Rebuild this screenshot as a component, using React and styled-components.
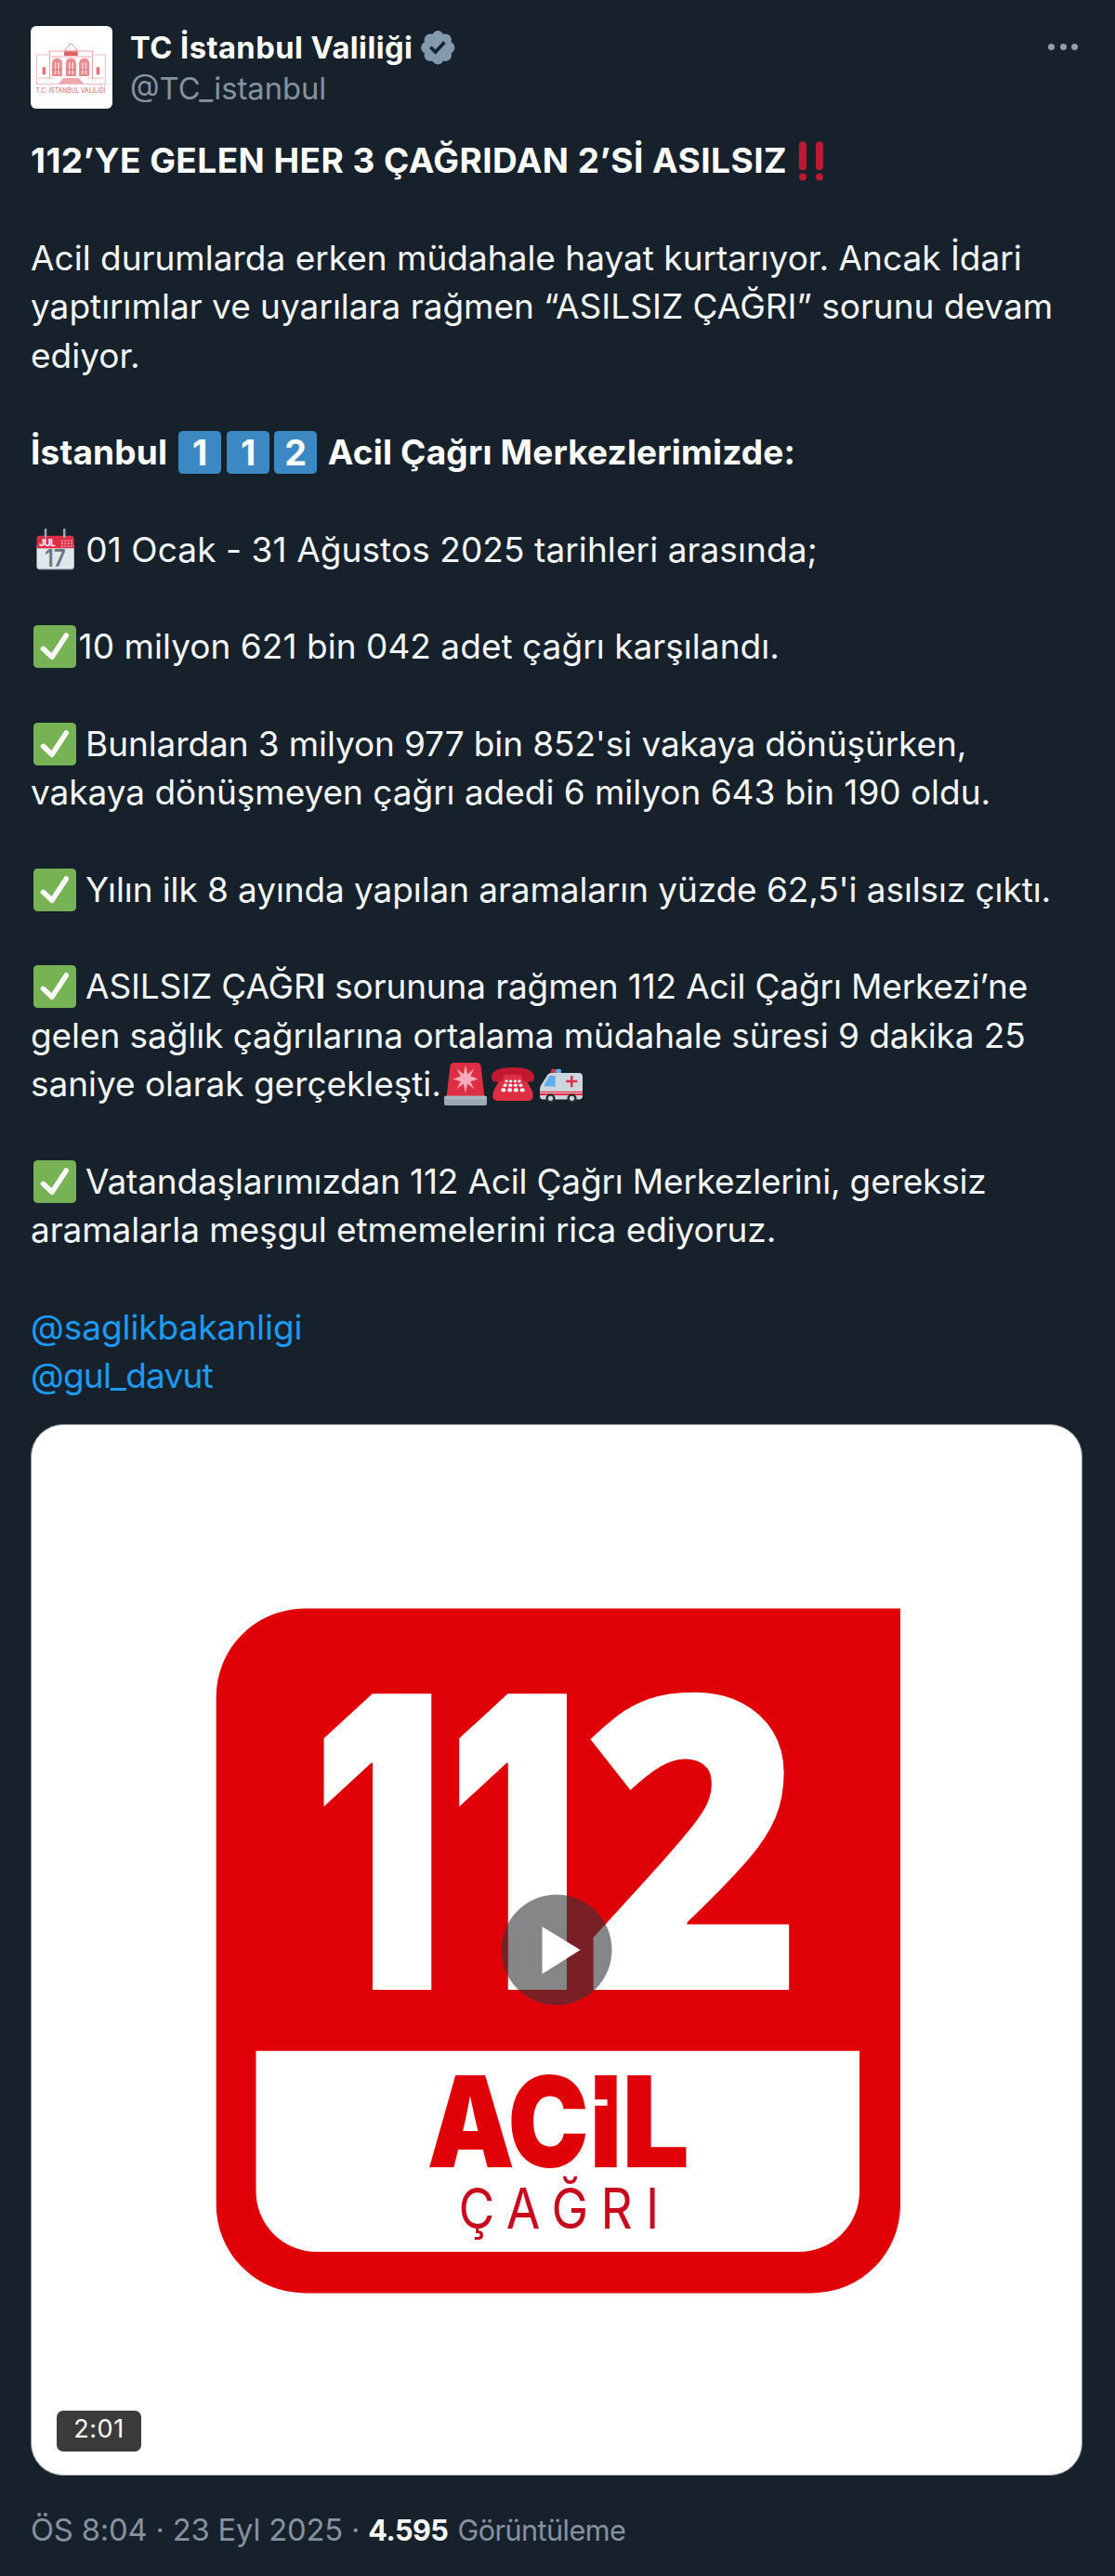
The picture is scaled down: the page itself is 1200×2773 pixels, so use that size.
import React from 'react'
import styled, { createGlobalStyle } from 'styled-components'

const BLUE = '#1d9bf0'
const GREY = '#8593a0'
const RED = '#df0008'

const GlobalStyle = createGlobalStyle`
  body {
    margin: 0;
    background: #17212c;
  }
`

const Tweet = styled.article`
  box-sizing: border-box;
  width: 1200px;
  height: 2773px;
  padding: 28px 35px 0 33px;
  overflow: hidden;
  background: #17212c;
  color: #f3f6f8;
  font-family: Inter, "Liberation Sans", sans-serif;
`

const Header = styled.header`
  display: flex;
  gap: 19px;
  height: 119.4px;
`

const Avatar = styled.svg`
  flex: none;
  width: 88px;
  height: 89px;
  border-radius: 6px;
  background: #fff;
`

const Author = styled.div`
  flex: 1;
  display: flex;
  flex-direction: column;
  padding-top: 1px;
  font-size: 32.7px;
  line-height: 44px;
`

const Name = styled.div`
  display: flex;
  align-items: center;
  gap: 5.5px;
  height: 44px;
  color: #fff;
  font-weight: 700;
  letter-spacing: 0.44px;
`

const Handle = styled.div`
  color: ${GREY};
`

const Badge = styled.svg`
  width: 42.5px;
  height: 42.5px;
  fill: #829aab;
`

const More = styled.div`
  display: flex;
  gap: 5.5px;
  padding: 19px 5px 0 0;
`

const Dot = styled.span`
  width: 7px;
  height: 7px;
  border-radius: 50%;
  background: #929ead;
`

const Body = styled.div`
  height: 1385.6px;
  font-size: 37px;
`

const Line = styled.div`
  height: 52.3px;
  line-height: 52.3px;
  white-space: pre;
  letter-spacing: ${p => p.$track || 0}px;
  font-weight: ${p => (p.$bold ? 700 : 400)};
  color: ${p => (p.$bold ? '#fff' : 'inherit')};
`

const Mention = styled.a`
  color: ${BLUE};
`

const Emoji = styled.svg`
  width: 46px;
  height: 46px;
  margin: 0 ${p => (p.$tight ? 0 : 2.8)}px 0 2.8px;
  vertical-align: -10px;
  letter-spacing: 0;
`

const Video = styled.div`
  position: relative;
  display: flex;
  width: 1130px;
  height: 1130px;
  border: 1px solid #8b959c;
  border-radius: 35px;
  overflow: hidden;
  background: #fff;
`

const Poster = styled.svg`
  width: 1130px;
  height: 1130px;
`

const PlayButton = styled.div`
  position: absolute;
  top: 50%;
  left: 50%;
  display: flex;
  width: 119px;
  height: 119px;
  transform: translate(-50%, -50%);
  border-radius: 50%;
  background: rgba(52, 54, 56, 0.6);
`

const Duration = styled.div`
  position: absolute;
  left: 27px;
  bottom: 25px;
  width: 91px;
  height: 44px;
  border-radius: 7px;
  background: #3b3b3b;
  color: #fff;
  font-size: 27px;
  line-height: 39.5px;
  letter-spacing: 0.5px;
  text-align: center;
`

const Footer = styled.footer`
  display: flex;
  align-items: baseline;
  margin-top: 35.8px;
  color: ${GREY};
  font-size: 32.7px;
  line-height: 44px;
  letter-spacing: -0.16px;
`

const Views = styled.span`
  margin-left: 9px;
  font-size: 30.6px;
  letter-spacing: -0.55px;
`

const Count = styled.b`
  margin-right: 10px;
  color: #fff;
  letter-spacing: -0.5px;
`

const Check = ({ tight }) => (
  <Emoji viewBox="0 0 36 36" $tight={tight}>
    <rect width="36" height="36" rx="3.6" fill="#77b255" />
    <path d="M8.2 19.8 15.6 26.8 27.6 8.6" fill="none" stroke="#fff" strokeWidth="4.3" strokeLinecap="round" strokeLinejoin="round" />
  </Emoji>
)

const Keycap = ({ digit }) => (
  <Emoji viewBox="0 0 36 36">
    <rect width="36" height="36" rx="3.6" fill="#3b88c3" />
    <text x="18" y="28.8" textAnchor="middle" fontSize="29.5" fontWeight="700" fill="#fff">{digit}</text>
  </Emoji>
)

const DoubleBang = () => (
  <Emoji viewBox="0 0 36 36" fill="#be1931">
    <rect x="7.8" y="1.8" width="6.2" height="24.3" rx="3" />
    <rect x="21.9" y="1.8" width="6.2" height="24.3" rx="3" />
    <circle cx="10.9" cy="31.7" r="3.1" />
    <circle cx="25" cy="31.7" r="3.1" />
  </Emoji>
)

const Calendar = () => (
  <Emoji viewBox="0 0 36 36" $tight>
    <path d="M2.8 14h31.4v18.4a2.4 2.4 0 0 1-2.4 2.4H5.2a2.4 2.4 0 0 1-2.4-2.4z" fill="#66757f" />
    <path d="M2.8 14h31.4v17.6a2.4 2.4 0 0 1-2.4 2.4H5.2a2.4 2.4 0 0 1-2.4-2.4z" fill="#e1e8ed" />
    <path d="M2.8 16.6V8.4A2.4 2.4 0 0 1 5.2 6h26.6a2.4 2.4 0 0 1 2.4 2.4v8.2z" fill="#dd2e44" />
    <path d="M10.2.9v6M26 .9v6" stroke="#99aab5" strokeWidth="2" strokeLinecap="round" />
    <text x="4.6" y="14.8" fontSize="8" fontWeight="700" fill="#fff" textLength="14">JUL</text>
    <g fill="#f4abba">
      {[9.7, 12, 14.3].map(y => [23.6, 26.2, 28.8, 31.4].map(x => (
        <rect key={`${x}-${y}`} x={x} y={y} width="1.3" height="1.3" />
      )))}
    </g>
    <text x="9.6" y="31.8" fontSize="20" fontWeight="600" fill="#66757f" textLength="17.5" lengthAdjust="spacingAndGlyphs">17</text>
  </Emoji>
)

const Siren = () => (
  <Emoji viewBox="0 0 36 36">
    <path d="M5 3.2C5.2 1.2 6.4 0 8.2 0h19.6c1.8 0 3 1.2 3.2 3.2L34 29H2z" fill="#dd2e44" />
    <path d="m18 2 1.7 7.6 5.6-4.6-3.2 6.3 6.4 2.3-6.4 2.3 3.2 6.3-5.6-4.6L18 25.6l-1.7-8-5.6 4.6 3.2-6.3-6.4-2.3 6.4-2.3L10.7 5l5.6 4.6z" fill="#f4abba" />
    <rect y="28" width="36" height="8" rx="1.5" fill="#99aab5" />
    <rect y="28" width="36" height="3" rx="1.5" fill="#aab8c2" />
  </Emoji>
)

const Phone = () => (
  <Emoji viewBox="0 0 36 36">
    <path d="M6.5 14C5.8 18 1 22 1 28c0 2.5 1.6 4 4 4h26c2.4 0 4-1.5 4-4 0-6-4.8-10-5.5-14-.5-3-2.5-5-6-5H12.500c-3.5 0-5.5 2-6 5z" fill="#dd2e44" />
    <path d="M18 4C8 4 0 6 0 12.500c0 2.500 1.500 3.700 3.500 3.700h3C9 16.200 10 14.500 10 12c0-1.500 1-2 2.500-2h11c1.500 0 2.500.5 2.500 2 0 2.500 1 4.200 3.500 4.200h3c2 0 3.500-1.200 3.500-3.700C36 6 28 4 18 4z" fill="#be1931" />
    <g fill="#fff">
      {[-1.5, -0.5, 0.5, 1.5].map(i => (
        <React.Fragment key={i}>
          <ellipse cx={18 + i * 3.6} cy="15.6" rx="1.3" ry="1.1" />
          <ellipse cx={18 + i * 4.4} cy="19" rx="1.6" ry="1.3" />
          <ellipse cx={18 + i * 5.3} cy="23" rx="2" ry="1.6" />
        </React.Fragment>
      ))}
    </g>
  </Emoji>
)

const Ambulance = () => (
  <Emoji viewBox="0 0 36 36">
    <rect x="9.5" y="5.2" width="4.5" height="4.5" rx="1.5" fill="#dd2e44" />
    <rect x="13.5" y="5.2" width="4.5" height="4.5" rx="1.5" fill="#5dadec" />
    <path d="M9.5 8.6H33a3 3 0 0 1 3 3V28a3 3 0 0 1-3 3H3a3 3 0 0 1-3-3v-5c0-2 .5-3.5 1.5-5l4.500-7c1-1.600 2-2.400 3.500-2.400z" fill="#ccd6dd" />
    <path d="M8.5 11H13v9H3.700c0-1 .3-1.700.8-2.500l3-5.800c.3-.5.5-.7 1-.7z" fill="#5dadec" />
    <path d="M.5 23.500H36V28H0v-3.500z" fill="#e1e8ed" />
    <path d="M.3 24H36v3.500H0v-2.300z" fill="#dd2e44" />
    <path d="M0 25.500h36" stroke="#e1e8ed" strokeWidth=".7" />
    <path d="M26.800 11v9.500M22.200 15.700h9.400" stroke="#dd2e44" strokeWidth="2" />
    <circle cx="9" cy="30" r="4" fill="#292f33" />
    <circle cx="9" cy="30" r="2" fill="#ccd6dd" />
    <circle cx="27" cy="30" r="4" fill="#292f33" />
    <circle cx="27" cy="30" r="2" fill="#ccd6dd" />
  </Emoji>
)

const ProfilePicture = () => (
  <Avatar viewBox="0 0 88 89">
    <g fill="none" stroke="#f0b6b9" strokeWidth=".9">
      <path d="M5.700 31h14M67.700 31H81M6.500 31v31M80.300 31v31M5 62.500h77M8 56h18M61 56h18" />
      <path d="M19.300 27h48.400M20.500 27v30M66.500 27v30M22 33h43" stroke="#e99ba0" />
      <path d="M36 27l7.400-8.500L51 27z" stroke="#e5838a" />
    </g>
    <rect x="36" y="27.5" width="14.7" height="4.5" fill="#dd6068" />
    {[28.4, 43.4, 57.7].map(x => (
      <React.Fragment key={x}>
        <path d={`M${x - 5.5} 54V40a5.5 5.5 0 0 1 11 0v14z`} fill="#e88d93" />
        <path d={`M${x - 2.5} 52V41a2.5 2.5 0 0 1 5 0v11z`} fill="#f6d3cf" />
        <path d={`M${x} 38v15M${x - 5} 47h10`} stroke="#dc6a72" strokeWidth="1.2" />
      </React.Fragment>
    ))}
    <rect x="12.6" y="44" width="3.6" height="8.5" rx="1.5" fill="#df747b" />
    <rect x="70.6" y="44" width="3.6" height="8.5" rx="1.5" fill="#df747b" />
    <path d="M35 56h17l5 6H30z" fill="#eda9ad" />
    <text x="5.5" y="71.5" fontSize="7" fontWeight="500" fill="#dc8088" textLength="75" lengthAdjust="spacingAndGlyphs">T.C. İSTANBUL VALİLİĞİ</text>
  </Avatar>
)

const VerifiedBadge = () => (
  <Badge viewBox="0 0 22 22">
    <path d="M20.396 11c-.018-.646-.215-1.275-.57-1.816-.354-.54-.852-.972-1.438-1.246.223-.607.27-1.264.14-1.897-.131-.634-.437-1.218-.882-1.687-.47-.445-1.053-.75-1.687-.882-.633-.13-1.29-.083-1.897.14-.273-.587-.704-1.086-1.245-1.44S11.647 1.62 11 1.604c-.646.017-1.273.213-1.813.568s-.969.854-1.24 1.44c-.608-.223-1.267-.272-1.902-.14-.635.13-1.22.436-1.69.882-.445.47-.749 1.055-.878 1.688-.13.633-.08 1.29.144 1.896-.587.274-1.087.705-1.443 1.245-.356.54-.555 1.17-.574 1.817.02.647.218 1.276.574 1.817.356.54.856.972 1.443 1.245-.224.606-.274 1.263-.144 1.896.13.634.433 1.218.877 1.688.47.443 1.054.747 1.687.878.633.132 1.29.084 1.897-.136.274.586.705 1.084 1.246 1.439.54.354 1.17.551 1.816.569.647-.016 1.276-.213 1.817-.567s.972-.854 1.245-1.44c.604.239 1.266.296 1.903.164.636-.132 1.22-.447 1.68-.907.46-.46.776-1.044.908-1.681s.075-1.299-.165-1.903c.586-.274 1.084-.705 1.439-1.246.354-.54.551-1.17.569-1.816zM9.662 14.85l-3.429-3.428 1.293-1.302 2.072 2.072 4.4-4.794 1.347 1.246z" />
  </Badge>
)

// 112 emergency sign shown as the first frame of the video
const EmergencySign = () => (
  <Poster viewBox="0 0 1130 1130">
    <path d="M294 197.600H935V839.400a95 95 0 0 1-95 95H293.700a95 95 0 0 1-95-95V292.600a95 95 0 0 1 95-95z" fill={RED} />
    <path d="M241.500 673.700H891V825a65 65 0 0 1-65 65H306.500a65 65 0 0 1-65-65z" fill="#fff" />
    <g fill="#fff" fontSize="438" fontWeight="900">
      <text transform="translate(300.5 608) scale(.731 1)">1</text>
      <text transform="translate(446.2 608) scale(.731 1)">1</text>
      <text transform="translate(592.5 608) scale(.928 1.01)" fontFamily="Open Sans">2</text>
    </g>
    <g fill={RED} fontSize="136" fontWeight="900">
      <text transform="translate(425.4 798.7) scale(.874 1)">A</text>
      <text transform="translate(512.5 798.7) scale(.858 1)">C</text>
      <text transform="translate(600.7 798.7) scale(.87 1)">I</text>
      <text transform="translate(635.3 798.7) scale(.945 1)">L</text>
    </g>
    <rect x="604" y="726" width="15.6" height="6.7" fill="#fff" />
    <text transform="translate(0 865) scale(.885 1)" x="519.1 577.2 632.1 692.2 746.9" fontSize="60" fill="#c80a1c">ÇAĞRI</text>
  </Poster>
)

const Blank = () => <Line />

export default function App() {
  return (
    <>
      <GlobalStyle />
      <Tweet>
        <Header>
          <ProfilePicture />
          <Author>
            <Name>TC İstanbul Valiliği<VerifiedBadge /></Name>
            <Handle>@TC_istanbul</Handle>
          </Author>
          <More><Dot /><Dot /><Dot /></More>
        </Header>

        <Body>
          <Line $bold $track={0.45}>112’YE GELEN HER 3 ÇAĞRIDAN 2’Sİ ASILSIZ<DoubleBang /></Line>
          <Blank />
          <Line>Acil durumlarda erken müdahale hayat kurtarıyor. Ancak İdari</Line>
          <Line>yaptırımlar ve uyarılara rağmen “ASILSIZ ÇAĞRI” sorunu devam</Line>
          <Line>ediyor.</Line>
          <Blank />
          <Line $bold $track={0.18}>İstanbul <Keycap digit="1" /><Keycap digit="1" /><Keycap digit="2" /> Acil Çağrı Merkezlerimizde:</Line>
          <Blank />
          <Line $track={0.08}><Calendar /> 01 Ocak - 31 Ağustos 2025 tarihleri arasında;</Line>
          <Blank />
          <Line $track={0.04}><Check />10 milyon 621 bin 042 adet çağrı karşılandı.</Line>
          <Blank />
          <Line $track={-0.11}><Check tight /> Bunlardan 3 milyon 977 bin 852'si vakaya dönüşürken,</Line>
          <Line $track={-0.04}>vakaya dönüşmeyen çağrı adedi 6 milyon 643 bin 190 oldu.</Line>
          <Blank />
          <Line $track={-0.1}><Check tight /> Yılın ilk 8 ayında yapılan aramaların yüzde 62,5'i asılsız çıktı.</Line>
          <Blank />
          <Line $track={-0.15}><Check tight /> ASILSIZ ÇAĞR<b>I</b> sorununa rağmen 112 Acil Çağrı Merkezi’ne</Line>
          <Line $track={-0.08}>gelen sağlık çağrılarına ortalama müdahale süresi 9 dakika 25</Line>
          <Line $track={-0.04}>saniye olarak gerçekleşti.<Siren /><Phone /><Ambulance /></Line>
          <Blank />
          <Line $track={-0.18}><Check tight /> Vatandaşlarımızdan 112 Acil Çağrı Merkezlerini, gereksiz</Line>
          <Line $track={-0.08}>aramalarla meşgul etmemelerini rica ediyoruz.</Line>
          <Blank />
          <Line $track={-0.05}><Mention>@saglikbakanligi</Mention></Line>
          <Line $track={-0.8}><Mention>@gul_davut</Mention></Line>
        </Body>

        <Video>
          <EmergencySign />
          <PlayButton>
            <svg viewBox="0 0 119 119">
              <path d="M44 34.500 85 59.500 44 85.500z" fill="#fff" />
            </svg>
          </PlayButton>
          <Duration>2:01</Duration>
        </Video>

        <Footer>
          ÖS 8:04 · 23 Eyl 2025 ·
          <Views><Count>4.595</Count>Görüntüleme</Views>
        </Footer>
      </Tweet>
    </>
  )
}
